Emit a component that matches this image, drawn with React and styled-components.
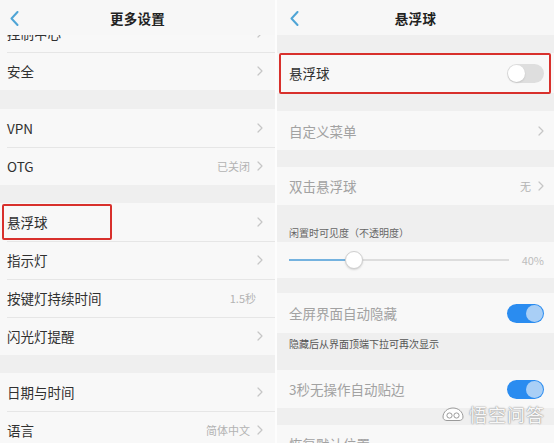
import styled, { createGlobalStyle } from "styled-components";

const GlobalStyle = createGlobalStyle`
  html, body {
    margin: 0;
    padding: 0;
    background: #fdfdfd;
  }
  body {
    font-family: "Noto Sans CJK SC", "Noto Sans", sans-serif;
  }
`;

const Screen = styled.div`
  display: flex;
  gap: 2px;
  width: 554px;
  height: 443px;
  overflow: hidden;
  background: #fdfdfd;
`;

const Panel = styled.section`
  --inset: ${(p) => p.$inset}px;
  --edge: ${(p) => p.$edge}px;
  position: relative;
  display: flex;
  flex-direction: column;
  flex: none;
  width: ${(p) => p.$width}px;
  height: 100%;
  overflow: hidden;
  background: #efefef;
`;

const Header = styled.header`
  position: relative;
  z-index: 2;
  flex: none;
  display: grid;
  grid-template-columns: 44px 1fr 44px;
  align-items: center;
  height: 35px;
  background: #f7f7f7;
`;

const Back = styled.span`
  display: flex;
  align-items: center;
  padding-left: ${(p) => p.$pad}px;
  padding-top: 1px;
`;

const Title = styled.h1`
  margin: 0;
  text-align: center;
  font-size: 13.5px;
  font-weight: 600;
  color: #222;
  letter-spacing: 0.3px;
`;

const List = styled.div`
  flex: 1;
  min-height: 0;
  overflow: hidden;
`;

const Scroll = styled.div`
  margin-top: ${(p) => -p.$offset}px;
`;

const Group = styled.div`
  margin-top: ${(p) => p.$space || 0}px;
  background: #f8f8f8;
`;

const Row = styled.div`
  position: relative;
  display: flex;
  align-items: center;
  height: ${(p) => p.$h || 38}px;
  padding: 0 var(--edge) 0 var(--inset);
  font-size: 13.5px;
  color: ${(p) => (p.$muted ? "#a2a2a2" : "#303030")};

  & + &::before {
    content: "";
    position: absolute;
    top: 0;
    left: var(--inset);
    right: 0;
    height: 1px;
    background: #e6e6e6;
  }
`;

const Label = styled.span`
  flex: 1;
  white-space: nowrap;
`;

const Value = styled.span`
  margin-right: 7px;
  font-size: 11px;
  color: #b3b3b3;
`;

const Highlight = styled.span`
  position: absolute;
  top: ${(p) => p.$top}px;
  bottom: ${(p) => p.$bottom}px;
  left: 2px;
  right: ${(p) => (p.$width ? "auto" : "3px")};
  width: ${(p) => (p.$width ? `${p.$width}px` : "auto")};
  border: 2px solid #d8302c;
  border-radius: 2px;
  pointer-events: none;
`;

const Toggle = styled.span`
  position: relative;
  flex: none;
  width: 37px;
  height: 19px;
  border-radius: 10px;
  background: ${(p) => (p.$on ? "#2a8cf0" : "#dedede")};

  &::after {
    content: "";
    position: absolute;
    top: 1px;
    left: ${(p) => (p.$on ? "19px" : "1px")};
    width: 17px;
    height: 17px;
    border-radius: 50%;
    background: ${(p) => (p.$on ? "#a9cff6" : "#ffffff")};
    box-shadow: ${(p) => (p.$on ? "none" : "0 1px 2px rgba(0,0,0,0.12)")};
  }
`;

const SectionLabel = styled.div`
  display: flex;
  align-items: ${(p) => (p.$top ? "flex-start" : "flex-end")};
  height: 37px;
  padding: ${(p) => (p.$top ? "4px var(--edge) 0" : "0 var(--edge) 2px")} var(--inset);
  box-sizing: border-box;
  font-size: 10px;
  line-height: 14px;
  color: ${(p) => (p.$top ? "#555" : "#666")};
`;

const SliderRow = styled(Row)`
  gap: 13px;
`;

const Track = styled.div`
  position: relative;
  flex: 1;
  height: 2px;
  background: #dddddd;
`;

const Fill = styled.div`
  position: absolute;
  left: 0;
  top: 0;
  bottom: 0;
  background: #74b2df;
`;

const Knob = styled.span`
  position: absolute;
  top: 50%;
  width: 16px;
  height: 16px;
  margin: -9px 0 0 -9px;
  border-radius: 50%;
  background: #fff;
  border: 1px solid #cfcfcf;
  box-shadow: 0 1px 2px rgba(0, 0, 0, 0.15);
`;

const Percent = styled.span`
  font-size: 11px;
  color: #bdbdbd;
`;

const Watermark = styled.div`
  position: absolute;
  right: 9px;
  bottom: 16px;
  display: flex;
  align-items: center;
  gap: 4px;
  font-size: 18px;
  letter-spacing: 1px;
  color: rgba(255, 255, 255, 0.95);
  text-shadow: 0 0 1px #8a8a8a, 0 0 2px rgba(0, 0, 0, 0.35);
`;

function BackIcon() {
  return (
    <svg width="9" height="15" viewBox="0 0 9 15">
      <polyline
        points="7.5,1 1.5,7.5 7.5,14"
        fill="none"
        stroke="#4fa5d6"
        strokeWidth="2"
        strokeLinecap="round"
        strokeLinejoin="round"
      />
    </svg>
  );
}

function Chevron() {
  return (
    <svg width="6" height="10" viewBox="0 0 6 10">
      <polyline
        points="1,1 5,5 1,9"
        fill="none"
        stroke="#c6c6c6"
        strokeWidth="1.2"
        strokeLinecap="round"
        strokeLinejoin="round"
      />
    </svg>
  );
}

function WukongLogo() {
  return (
    <svg width="24" height="18" viewBox="0 0 24 18">
      <path
        d="M2 12c0-5 4.5-9 10-9s10 4 10 9c0 2.5-2 3.5-4 3.5H6c-2 0-4-1-4-3.5z"
        fill="rgba(255,255,255,0.9)"
        stroke="#9a9a9a"
        strokeWidth="1"
      />
      <circle cx="8.5" cy="10.5" r="2.6" fill="#fff" stroke="#9a9a9a" strokeWidth="1" />
      <circle cx="15.5" cy="10.5" r="2.6" fill="#fff" stroke="#9a9a9a" strokeWidth="1" />
    </svg>
  );
}

const moreGroups = [
  { space: 0, rows: [{ label: "控制中心" }, { label: "安全" }] },
  { space: 19, rows: [{ label: "VPN" }, { label: "OTG", value: "已关闭" }] },
  {
    space: 18,
    rows: [
      { label: "悬浮球", mark: true },
      { label: "指示灯" },
      { label: "按键灯持续时间", value: "1.5秒", noArrow: true },
      { label: "闪光灯提醒" },
    ],
  },
  { space: 18, rows: [{ label: "日期与时间" }, { label: "语言", value: "简体中文" }] },
];

function MoreSettings() {
  return (
    <Panel $width={275} $inset={7} $edge={12}>
      <Header>
        <Back $pad={10}>
          <BackIcon />
        </Back>
        <Title>更多设置</Title>
      </Header>
      <List>
        <Scroll $offset={21}>
          {moreGroups.map((g, i) => (
            <Group key={i} $space={g.space}>
              {g.rows.map((r) => (
                <Row key={r.label}>
                  <Label>{r.label}</Label>
                  {r.value && <Value>{r.value}</Value>}
                  {!r.noArrow && <Chevron />}
                  {r.mark && <Highlight $top={1} $bottom={1} $width={106} />}
                </Row>
              ))}
            </Group>
          ))}
        </Scroll>
      </List>
    </Panel>
  );
}

function FloatBall() {
  const opacity = 40;
  const min = 15;
  const pos = ((opacity - min) / (100 - min)) * 100;

  return (
    <Panel $width={277} $inset={12} $edge={10}>
      <Header>
        <Back $pad={13}>
          <BackIcon />
        </Back>
        <Title>悬浮球</Title>
      </Header>
      <List>
        <Group $space={18}>
          <Row $h={40}>
            <Label>悬浮球</Label>
            <Toggle />
            <Highlight $top={0} $bottom={-1} />
          </Row>
        </Group>
        <Group $space={18}>
          <Row $h={39} $muted>
            <Label>自定义菜单</Label>
            <Chevron />
          </Row>
        </Group>
        <Group $space={17}>
          <Row $muted>
            <Label>双击悬浮球</Label>
            <Value>无</Value>
            <Chevron />
          </Row>
        </Group>
        <SectionLabel>闲置时可见度（不透明度）</SectionLabel>
        <Group>
          <SliderRow $h={36}>
            <Track>
              <Fill style={{ width: `${pos}%` }} />
              <Knob style={{ left: `${pos}%` }} />
            </Track>
            <Percent>{opacity}%</Percent>
          </SliderRow>
        </Group>
        <Group $space={15}>
          <Row $h={40} $muted>
            <Label>全屏界面自动隐藏</Label>
            <Toggle $on />
          </Row>
        </Group>
        <SectionLabel $top>隐藏后从界面顶端下拉可再次显示</SectionLabel>
        <Group>
          <Row $muted>
            <Label>3秒无操作自动贴边</Label>
            <Toggle $on />
          </Row>
        </Group>
        <Group $space={17}>
          <Row $muted>
            <Label>恢复默认位置</Label>
          </Row>
        </Group>
      </List>
      <Watermark>
        <WukongLogo />
        <span>悟空问答</span>
      </Watermark>
    </Panel>
  );
}

export default function App() {
  return (
    <>
      <GlobalStyle />
      <Screen>
        <MoreSettings />
        <FloatBall />
      </Screen>
    </>
  );
}
